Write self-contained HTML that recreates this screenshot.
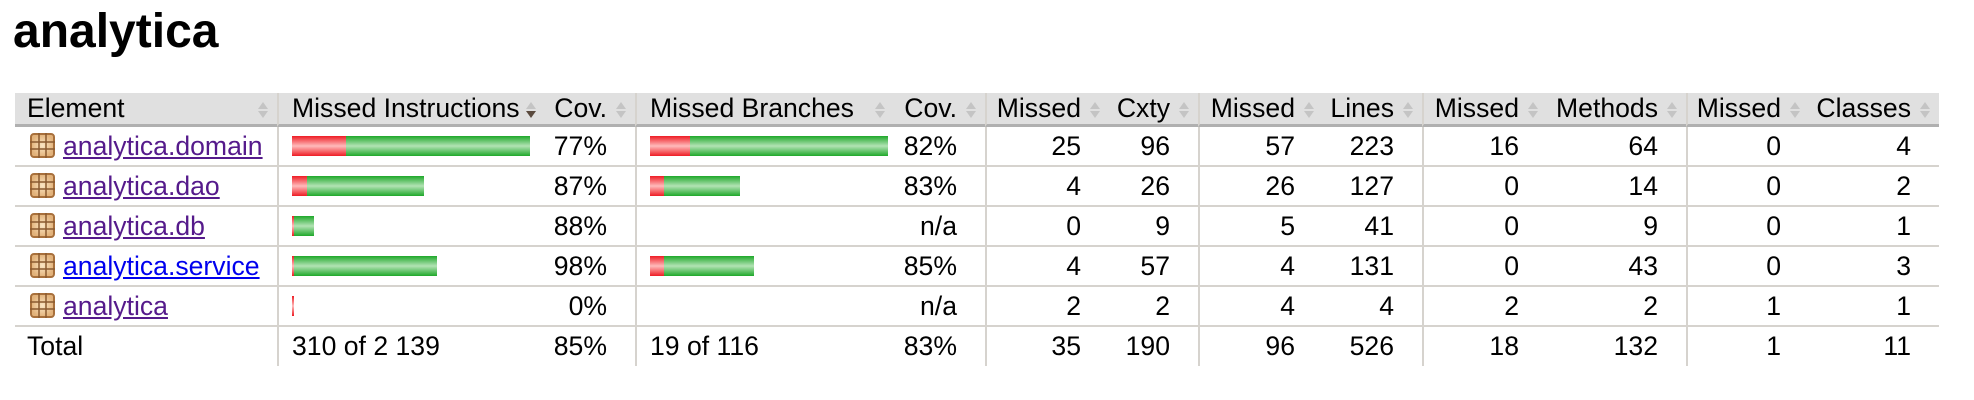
<!DOCTYPE html>
<html><head><meta charset="utf-8">
<style>
body{margin:0;background:#fff;font-family:"Liberation Sans",Arial,sans-serif;color:#000;width:1974px;height:400px;overflow:hidden;position:relative}
h1{position:absolute;left:13px;top:2px;margin:0;font-size:48px;font-weight:bold;line-height:60px}
table{position:absolute;left:15px;top:93px;border-collapse:separate;border-spacing:0;table-layout:fixed;width:1924px;font-size:26.6px}
td{padding:0;white-space:nowrap;overflow:hidden;box-sizing:border-box}
thead td{background:#e0e0e0;height:34px;border-bottom:3px solid #b0b0b0;position:relative;vertical-align:middle;line-height:31px}
tbody td{height:40px;border-bottom:2px solid #d6d3ce;vertical-align:middle}
tfoot td{height:39px;vertical-align:middle}
.g{border-left:2px solid #d6d3ce}
.n{text-align:right;padding-right:28px}
.l{text-align:left;padding-left:13px}
.e{padding-left:12px}
.s{position:absolute;right:8px;top:8px;width:12px;height:18px}
a{text-decoration:underline;color:#551a8b}
a.b{color:#0000ee}
.ic{display:inline-block;vertical-align:middle;width:25px;height:25px;margin:0 8px 0 3px;position:relative;top:-2px}
.bar{display:inline-block;height:20px;vertical-align:middle}
.r{background:linear-gradient(#ee1c24,#fbb 50%,#ee1c24)}
.gr{background:linear-gradient(#1fa82a,#b2e3b4 50%,#1fa82a)}
.bc{font-size:0;padding-left:13px}
</style></head><body>
<h1>analytica</h1>
<table>
<colgroup><col style="width:262px"><col style="width:268px"><col style="width:90px"><col style="width:259px"><col style="width:91px"><col style="width:124px"><col style="width:89px"><col style="width:125px"><col style="width:99px"><col style="width:125px"><col style="width:139px"><col style="width:123px"><col style="width:130px"></colgroup>
<thead><tr>
<td class="e">Element<svg class="s" viewBox="0 0 12 18"><path d="M6 1L11 8H1Z" fill="#c4c4c4"/><path d="M6 17L11 10H1Z" fill="#c4c4c4"/></svg></td>
<td class="g l">Missed Instructions<svg class="s" viewBox="0 0 12 18"><path d="M6 1L11 8H1Z" fill="#c4c4c4"/><path d="M6 17L11 10H1Z" fill="#5a4a3e"/></svg></td>
<td class="n">Cov.<svg class="s" viewBox="0 0 12 18"><path d="M6 1L11 8H1Z" fill="#c4c4c4"/><path d="M6 17L11 10H1Z" fill="#c4c4c4"/></svg></td>
<td class="g l">Missed Branches<svg class="s" viewBox="0 0 12 18"><path d="M6 1L11 8H1Z" fill="#c4c4c4"/><path d="M6 17L11 10H1Z" fill="#c4c4c4"/></svg></td>
<td class="n">Cov.<svg class="s" viewBox="0 0 12 18"><path d="M6 1L11 8H1Z" fill="#c4c4c4"/><path d="M6 17L11 10H1Z" fill="#c4c4c4"/></svg></td>
<td class="g n">Missed<svg class="s" viewBox="0 0 12 18"><path d="M6 1L11 8H1Z" fill="#c4c4c4"/><path d="M6 17L11 10H1Z" fill="#c4c4c4"/></svg></td>
<td class="n">Cxty<svg class="s" viewBox="0 0 12 18"><path d="M6 1L11 8H1Z" fill="#c4c4c4"/><path d="M6 17L11 10H1Z" fill="#c4c4c4"/></svg></td>
<td class="g n">Missed<svg class="s" viewBox="0 0 12 18"><path d="M6 1L11 8H1Z" fill="#c4c4c4"/><path d="M6 17L11 10H1Z" fill="#c4c4c4"/></svg></td>
<td class="n">Lines<svg class="s" viewBox="0 0 12 18"><path d="M6 1L11 8H1Z" fill="#c4c4c4"/><path d="M6 17L11 10H1Z" fill="#c4c4c4"/></svg></td>
<td class="g n">Missed<svg class="s" viewBox="0 0 12 18"><path d="M6 1L11 8H1Z" fill="#c4c4c4"/><path d="M6 17L11 10H1Z" fill="#c4c4c4"/></svg></td>
<td class="n">Methods<svg class="s" viewBox="0 0 12 18"><path d="M6 1L11 8H1Z" fill="#c4c4c4"/><path d="M6 17L11 10H1Z" fill="#c4c4c4"/></svg></td>
<td class="g n">Missed<svg class="s" viewBox="0 0 12 18"><path d="M6 1L11 8H1Z" fill="#c4c4c4"/><path d="M6 17L11 10H1Z" fill="#c4c4c4"/></svg></td>
<td class="n">Classes<svg class="s" viewBox="0 0 12 18"><path d="M6 1L11 8H1Z" fill="#c4c4c4"/><path d="M6 17L11 10H1Z" fill="#c4c4c4"/></svg></td>
</tr></thead>
<tbody>
<tr><td class="e"><svg class="ic" viewBox="0 0 25 25"><defs><radialGradient id="p"><stop offset="0" stop-color="#fbe6c4"/><stop offset="1" stop-color="#e2b27a"/></radialGradient></defs><rect x="1" y="1" width="23" height="23" rx="3" fill="url(#p)" stroke="#a8703c" stroke-width="2"/><path d="M9 0V25M16 0V25M0 9H25M0 16H25" stroke="#8a5a30" stroke-width="1.5"/></svg><a href="#">analytica.domain</a></td>
<td class="g bc"><span class="bar r" style="width:54px"></span><span class="bar gr" style="width:184px"></span></td><td class="n">77%</td>
<td class="g bc"><span class="bar r" style="width:40px"></span><span class="bar gr" style="width:198px"></span></td><td class="n">82%</td>
<td class="g n">25</td><td class="n">96</td><td class="g n">57</td><td class="n">223</td><td class="g n">16</td><td class="n">64</td><td class="g n">0</td><td class="n">4</td></tr>
<tr><td class="e"><svg class="ic" viewBox="0 0 25 25"><rect x="1" y="1" width="23" height="23" rx="3" fill="url(#p)" stroke="#a8703c" stroke-width="2"/><path d="M9 0V25M16 0V25M0 9H25M0 16H25" stroke="#8a5a30" stroke-width="1.5"/></svg><a href="#">analytica.dao</a></td>
<td class="g bc"><span class="bar r" style="width:15px"></span><span class="bar gr" style="width:117px"></span></td><td class="n">87%</td>
<td class="g bc"><span class="bar r" style="width:14px"></span><span class="bar gr" style="width:76px"></span></td><td class="n">83%</td>
<td class="g n">4</td><td class="n">26</td><td class="g n">26</td><td class="n">127</td><td class="g n">0</td><td class="n">14</td><td class="g n">0</td><td class="n">2</td></tr>
<tr><td class="e"><svg class="ic" viewBox="0 0 25 25"><rect x="1" y="1" width="23" height="23" rx="3" fill="url(#p)" stroke="#a8703c" stroke-width="2"/><path d="M9 0V25M16 0V25M0 9H25M0 16H25" stroke="#8a5a30" stroke-width="1.5"/></svg><a href="#">analytica.db</a></td>
<td class="g bc"><span class="bar r" style="width:2px"></span><span class="bar gr" style="width:20px"></span></td><td class="n">88%</td>
<td class="g"></td><td class="n">n/a</td>
<td class="g n">0</td><td class="n">9</td><td class="g n">5</td><td class="n">41</td><td class="g n">0</td><td class="n">9</td><td class="g n">0</td><td class="n">1</td></tr>
<tr><td class="e"><svg class="ic" viewBox="0 0 25 25"><rect x="1" y="1" width="23" height="23" rx="3" fill="url(#p)" stroke="#a8703c" stroke-width="2"/><path d="M9 0V25M16 0V25M0 9H25M0 16H25" stroke="#8a5a30" stroke-width="1.5"/></svg><a class="b" href="#">analytica.service</a></td>
<td class="g bc"><span class="bar r" style="width:2px"></span><span class="bar gr" style="width:143px"></span></td><td class="n">98%</td>
<td class="g bc"><span class="bar r" style="width:14px"></span><span class="bar gr" style="width:90px"></span></td><td class="n">85%</td>
<td class="g n">4</td><td class="n">57</td><td class="g n">4</td><td class="n">131</td><td class="g n">0</td><td class="n">43</td><td class="g n">0</td><td class="n">3</td></tr>
<tr><td class="e"><svg class="ic" viewBox="0 0 25 25"><rect x="1" y="1" width="23" height="23" rx="3" fill="url(#p)" stroke="#a8703c" stroke-width="2"/><path d="M9 0V25M16 0V25M0 9H25M0 16H25" stroke="#8a5a30" stroke-width="1.5"/></svg><a href="#">analytica</a></td>
<td class="g bc"><span class="bar r" style="width:2px"></span></td><td class="n">0%</td>
<td class="g"></td><td class="n">n/a</td>
<td class="g n">2</td><td class="n">2</td><td class="g n">4</td><td class="n">4</td><td class="g n">2</td><td class="n">2</td><td class="g n">1</td><td class="n">1</td></tr>
</tbody>
<tfoot><tr><td class="e">Total</td><td class="g l">310 of 2 139</td><td class="n">85%</td><td class="g l">19 of 116</td><td class="n">83%</td>
<td class="g n">35</td><td class="n">190</td><td class="g n">96</td><td class="n">526</td><td class="g n">18</td><td class="n">132</td><td class="g n">1</td><td class="n">11</td></tr></tfoot>
</table>
</body></html>
